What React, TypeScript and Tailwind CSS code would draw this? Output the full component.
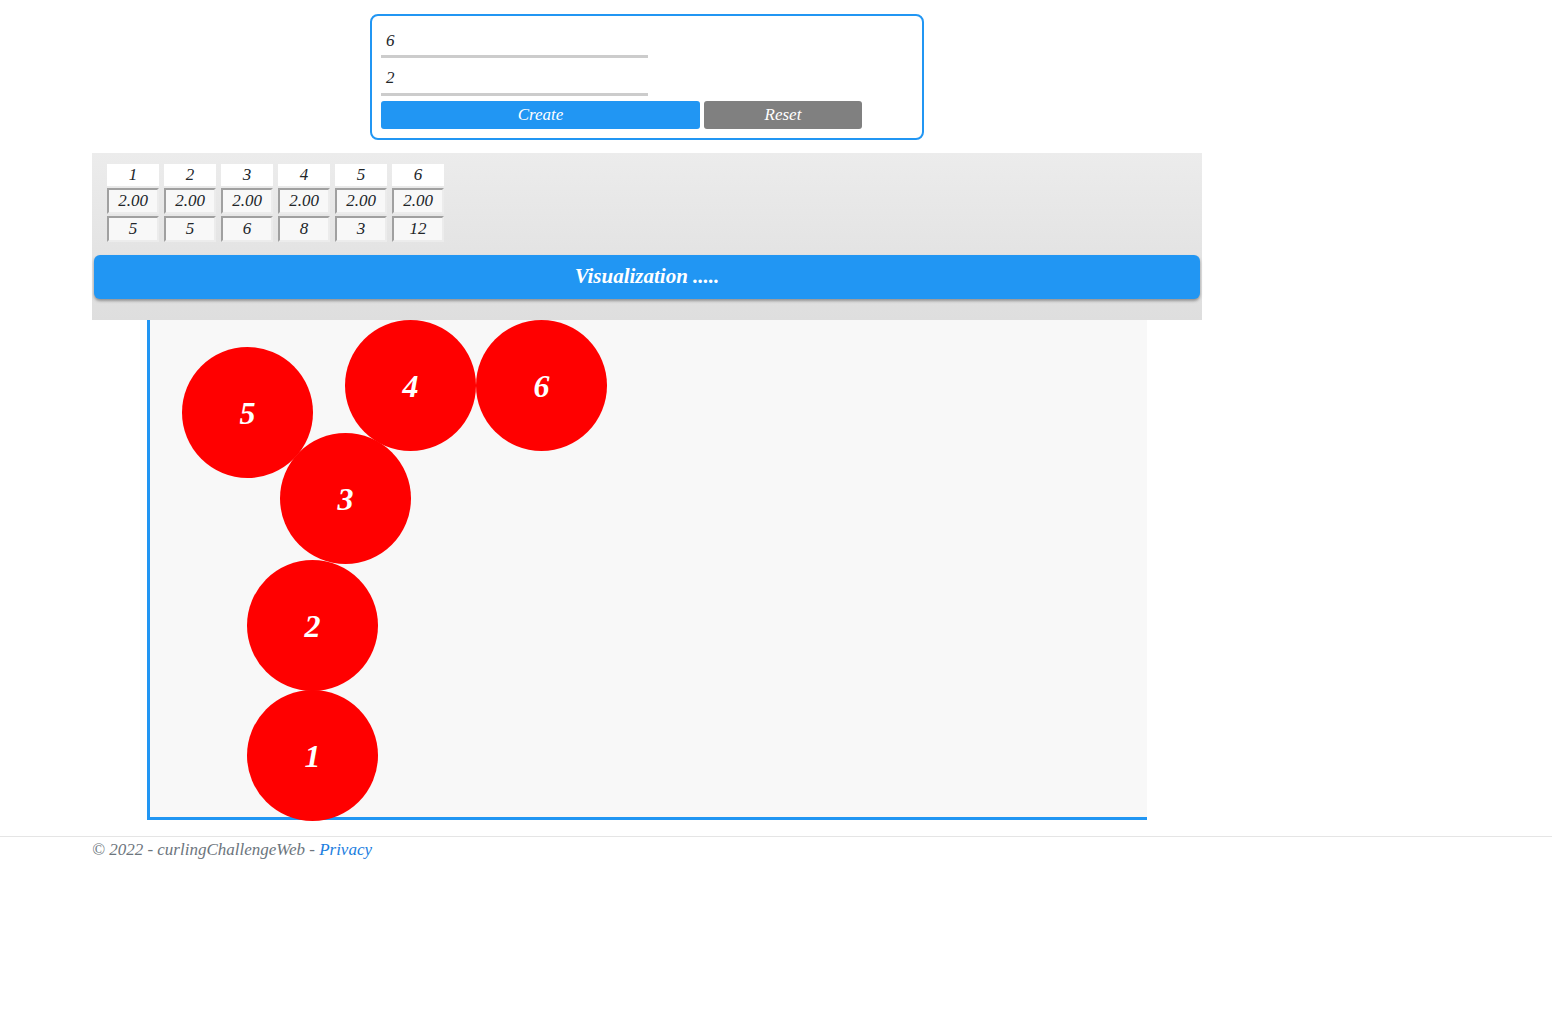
import React from "react";

const serif = { fontFamily: '"Liberation Serif", "DejaVu Serif", serif' };

const cols = [
  { id: "1", r: "2.00", v: "5" },
  { id: "2", r: "2.00", v: "5" },
  { id: "3", r: "2.00", v: "6" },
  { id: "4", r: "2.00", v: "8" },
  { id: "5", r: "2.00", v: "3" },
  { id: "6", r: "2.00", v: "12" },
];

const circles = [
  { n: "1", l: 100, t: 370 },
  { n: "2", l: 100, t: 240 },
  { n: "3", l: 133, t: 113 },
  { n: "4", l: 198, t: 0 },
  { n: "5", l: 35, t: 27 },
  { n: "6", l: 329, t: 0 },
];

export default function App() {
  return (
    <div className="min-h-[1036px] bg-white italic text-[#212529]" style={serif}>
      <div className="ml-[92px] w-[1110px] pt-[14px]">
        <div className="mx-auto flex w-[554px] flex-col rounded-[8px] border-2 border-[#2196f3] px-[9px] pt-[13px] pb-[9px]">
          <div className="w-[267px] border-b-[3px] border-[#cccccc] px-[5px] pb-[2px] text-[17px] leading-[24px]">6</div>
          <div className="mt-[9px] w-[267px] border-b-[3px] border-[#cccccc] px-[5px] pb-[4px] text-[17px] leading-[22px]">2</div>
          <div className="mt-[5px] flex gap-[4px]">
            <div className="flex h-[28px] w-[319px] items-center justify-center rounded-[3px] bg-[#2196f3] text-[17px] text-white">Create</div>
            <div className="flex h-[28px] w-[158px] items-center justify-center rounded-[3px] bg-[#808080] text-[17px] text-white">Reset</div>
          </div>
        </div>

        <div className="mt-[13px] h-[167px] bg-gradient-to-b from-[#ececec] to-[#dedede] pt-[11px]">
          <div className="ml-[15px] flex gap-[5px]">
            {cols.map((c) => (
              <div key={c.id} className="flex w-[52px] flex-col gap-[2px] text-center text-[17px]">
                <div className="h-[22px] bg-white leading-[22px]">{c.id}</div>
                <div className="h-[26px] border-2 border-t-[#a0a0a0] border-l-[#a0a0a0] border-r-[#ececec] border-b-[#ececec] bg-[#f8f8f8] leading-[22px]">{c.r}</div>
                <div className="h-[26px] border-2 border-t-[#a0a0a0] border-l-[#a0a0a0] border-r-[#ececec] border-b-[#ececec] bg-[#f8f8f8] leading-[22px]">{c.v}</div>
              </div>
            ))}
          </div>
          <div className="mx-[2px] mt-[13px] flex h-[44px] items-center justify-center rounded-[6px] bg-[#2196f3] text-[21px] font-bold text-white shadow-[0_2px_3px_rgba(0,0,0,0.35)]">
            Visualization .....
          </div>
        </div>

        <div className="relative mx-auto h-[500px] w-[1000px] border-b-[3px] border-l-[3px] border-[#2196f3] bg-[#f8f8f8]">
          {circles.map((c) => (
            <div
              key={c.n}
              className="absolute flex h-[131px] w-[131px] items-center justify-center rounded-full bg-[#ff0000] text-[32px] font-bold text-white"
              style={{ left: c.l - 3, top: c.t }}
            >
              {c.n}
            </div>
          ))}
        </div>
      </div>
      <div className="mt-[16px] border-t border-[#e5e5e5]">
        <div className="ml-[92px] pt-[1px] text-[17px] leading-[24px] text-[#6c757d]">
          © 2022 - curlingChallengeWeb - <span className="text-[#1b7ee0]">Privacy</span>
        </div>
      </div>
    </div>
  );
}
